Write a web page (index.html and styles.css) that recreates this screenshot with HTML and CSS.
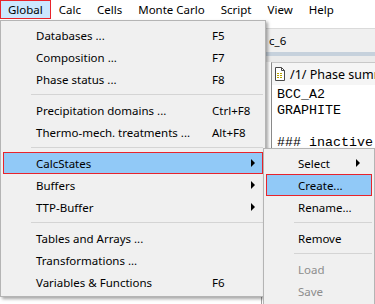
FILE: index.html
```html
<!DOCTYPE html>
<html lang="en">
  <head>
    <meta charset="utf-8">
    <title>Global menu</title>
    <link rel="stylesheet" href="styles.css">
  </head>
  <body>
    <div class="screen">

      <!-- Menu bar -->
      <nav class="menubar">
        <span class="menubar__item is-open">Global</span>
        <span class="menubar__item">Calc</span>
        <span class="menubar__item">Cells</span>
        <span class="menubar__item">Monte Carlo</span>
        <span class="menubar__item">Script</span>
        <span class="menubar__item">View</span>
        <span class="menubar__item">Help</span>
      </nav>

      <!-- Workspace behind the menus -->
      <div class="workspace">
        <div class="workspace__side"></div>
        <div class="mdi">
          <div class="mdi__tabs"><span class="mdi__tab">c_6</span></div>
          <div class="mdi__band"></div>
          <div class="doc">
            <div class="doc__title">
              <svg class="doc__icon" width="10" height="14" viewBox="0 0 10 14">
                <path d="M0.5 0.5h6l3 3v10h-9z" fill="#fff" stroke="#4a4a4a"/>
                <path d="M6.5 0.5v3h3" fill="none" stroke="#4a4a4a"/>
                <path d="M2 6.5h2M5 6.5h2M2 8.5h2M5 8.5h2M2 10.5h2M5 10.5h2" stroke="#b8a400"/>
              </svg>
              <span>/1/ Phase summary</span>
            </div>
<pre class="doc__text">BCC_A2
GRAPHITE

### inactive</pre>
          </div>
        </div>
      </div>

      <!-- Global dropdown -->
      <div class="menu menu--global">
        <div class="menu__item"><span class="menu__label">Databases ...</span><span class="menu__key">F5</span></div>
        <div class="menu__item"><span class="menu__label">Composition ...</span><span class="menu__key">F7</span></div>
        <div class="menu__item"><span class="menu__label">Phase status ...</span><span class="menu__key">F8</span></div>
        <div class="menu__sep"></div>
        <div class="menu__item"><span class="menu__label">Precipitation domains ...</span><span class="menu__key">Ctrl+F8</span></div>
        <div class="menu__item"><span class="menu__label">Thermo-mech. treatments ...</span><span class="menu__key">Alt+F8</span></div>
        <div class="menu__sep"></div>
        <div class="menu__item is-active"><span class="menu__label">CalcStates</span><span class="menu__arrow"></span></div>
        <div class="menu__item"><span class="menu__label">Buffers</span><span class="menu__arrow"></span></div>
        <div class="menu__item"><span class="menu__label">TTP-Buffer</span><span class="menu__arrow"></span></div>
        <div class="menu__sep"></div>
        <div class="menu__item"><span class="menu__label">Tables and Arrays ...</span></div>
        <div class="menu__item"><span class="menu__label">Transformations ...</span></div>
        <div class="menu__item"><span class="menu__label">Variables &amp; Functions</span><span class="menu__key">F6</span></div>
      </div>

      <!-- CalcStates submenu -->
      <div class="menu menu--sub">
        <div class="menu__item"><span class="menu__label">Select</span><span class="menu__arrow"></span></div>
        <div class="menu__item is-active"><span class="menu__label">Create...</span></div>
        <div class="menu__item"><span class="menu__label">Rename...</span></div>
        <div class="menu__sep"></div>
        <div class="menu__item"><span class="menu__label">Remove</span></div>
        <div class="menu__sep"></div>
        <div class="menu__item is-disabled"><span class="menu__label">Load</span></div>
        <div class="menu__item is-disabled"><span class="menu__label">Save</span></div>
      </div>

    </div>
  </body>
</html>
```

FILE: styles.css
```css
* { box-sizing: border-box; }

body {
  margin: 0;
  background: #fff;
  color: #000;
  font-family: "Noto Sans", sans-serif;
  font-size: 11.5px;
}

.screen {
  position: relative;
  width: 375px;
  height: 304px;
  overflow: hidden;
}

/* menu bar */
.menubar {
  display: flex;
  height: 20px;
  background: #fff;
}

.menubar__item {
  height: 19px;
  line-height: 19px;
  padding: 0 8px;
  white-space: nowrap;
}

.menubar__item.is-open {
  background: #cce8ff;
  box-shadow: inset 0 0 0 1px #e8242c;
}

/* workspace */
.workspace {
  display: flex;
  height: 284px;
}

.workspace__side {
  flex: 0 0 262px;
  border-right: 1px solid #a0a0a0;
}

.mdi {
  flex: 1;
  min-width: 0;
  overflow: hidden;
  display: flex;
  flex-direction: column;
  padding-top: 8px;
  background: #fff;
}

.mdi__tabs {
  height: 24px;
  border-top: 1px solid #dadada;
  background: #f0f0f0;
  display: flex;
  align-items: center;
  padding-left: 7px;
}

.mdi__band {
  height: 10px;
  background: linear-gradient(#c6d1dc 0 4px, #ebebeb 4px);
}

.doc {
  flex: 1;
  margin-left: 9px;
  border-left: 1px solid #8a8a8a;
  border-top: 1px solid #c8c8c8;
  background: #fff;
}

.doc__title {
  height: 22px;
  display: flex;
  align-items: center;
  gap: 5px;
  padding-left: 3px;
  background: #f5f5f5;
  white-space: nowrap;
  font-size: 12.5px;
}

.doc__icon { flex: none; }

.doc__text {
  margin: 0;
  padding: 2px 0 0 5px;
  font-family: "Liberation Mono", monospace;
  font-size: 13.33px;
  line-height: 16px;
}

/* menus */
.menu {
  position: absolute;
  padding: 3px 2px;
  background: #f0f0f0;
  border: 1px solid #b4b4b4;
  box-shadow: 2px 2px 3px rgba(0, 0, 0, .35);
}

.menu--global { left: 0; top: 20px; width: 266px; }
.menu--sub    { left: 263px; top: 148px; width: 112px; }

.menu__item {
  display: grid;
  height: 22px;
  align-items: center;
  white-space: nowrap;
}

.menu--global .menu__item { padding-left: 33px; grid-template-columns: 176px 39px 1fr; }
.menu--sub .menu__item    { padding-left: 32px; grid-template-columns: 58px 0 1fr; }

.menu__label { grid-column: 1; }
.menu__key   { grid-column: 2; }

.menu__arrow {
  grid-column: 3;
  width: 0;
  height: 0;
  border-left: 4px solid #000;
  border-top: 4px solid transparent;
  border-bottom: 4px solid transparent;
}

.menu__item.is-active {
  background: #91c9f7;
  box-shadow: inset 0 0 0 1px #e8242c;
}

.menu__item.is-disabled { color: #8d8d8d; }

.menu__sep {
  height: 1px;
  margin: 4px 0 4px 28px;
  background: #d4d4d4;
}
```
